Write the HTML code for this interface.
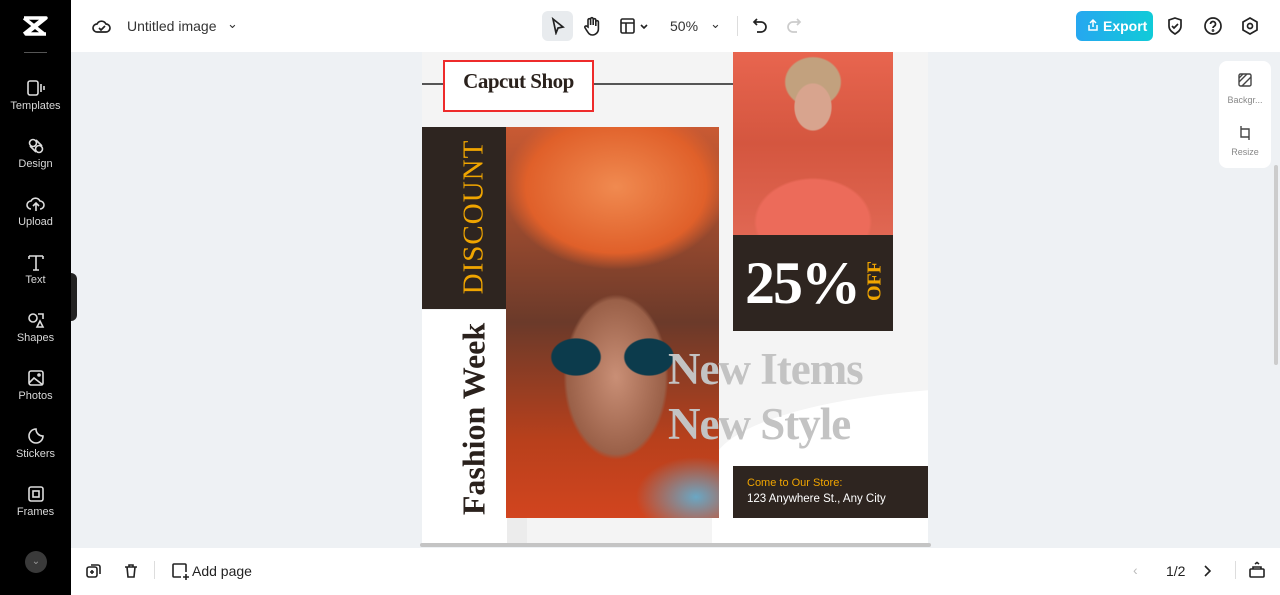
<!DOCTYPE html>
<html><head><meta charset="utf-8"><style>
*{margin:0;padding:0;box-sizing:border-box}
body{width:1280px;height:595px;overflow:hidden;background:#eef1f4;font-family:"Liberation Sans",sans-serif;position:relative}
.abs{position:absolute}
.side{left:0;top:0;width:71px;height:595px;background:#000}
.si{position:absolute;left:0;width:71px;text-align:center;color:#d8d8d8;font-size:11px}
.si svg{display:block;margin:0 auto 3px}
.top{left:71px;top:0;width:1209px;height:52px;background:#fff}
.bot{left:71px;top:548px;width:1209px;height:47px;background:#fff}
.serif{font-family:"Liberation Serif",serif}
</style></head><body>
<div class="abs side"></div>
<svg class="abs" style="left:22px;top:15px" width="26" height="22" viewBox="0 0 26 22"><path d="M2 3h22L4 19h20M2 3l20 16M2 19l20-16" stroke="#fff" stroke-width="3.5" fill="none" stroke-linejoin="round"/></svg>
<div class="abs" style="left:24px;top:52px;width:23px;height:1px;background:#555"></div>
<div class="si" style="top:79px"><svg width="20" height="18" viewBox="0 0 20 18" fill="none" stroke="#ddd" stroke-width="1.6"><rect x="2" y="2" width="10" height="14" rx="2"/><path d="M15 5v8M18 7v4"/></svg>Templates</div>
<div class="si" style="top:137px"><svg width="20" height="18" viewBox="0 0 20 18" fill="none" stroke="#ddd" stroke-width="1.6"><circle cx="7" cy="6" r="3.5"/><circle cx="13" cy="12" r="3.5"/><path d="M10 3l6 6M4 9l6 6"/></svg>Design</div>
<div class="si" style="top:195px"><svg width="20" height="18" viewBox="0 0 20 18" fill="none" stroke="#ddd" stroke-width="1.6"><path d="M5 14a4 4 0 010-8 5 5 0 019 0 4 4 0 010 8M10 16V9M7 11l3-3 3 3"/></svg>Upload</div>
<div class="si" style="top:253px"><svg width="20" height="18" viewBox="0 0 20 18" fill="none" stroke="#ddd" stroke-width="1.6"><path d="M3 3h14M10 3v14M3 3v3M17 3v3M7 17h6"/></svg>Text</div>
<div class="si" style="top:311px"><svg width="20" height="18" viewBox="0 0 20 18" fill="none" stroke="#ddd" stroke-width="1.6"><circle cx="7" cy="7" r="4"/><path d="M12 3h5v5M11 16l3-6 3 6z"/></svg>Shapes</div>
<div class="si" style="top:369px"><svg width="20" height="18" viewBox="0 0 20 18" fill="none" stroke="#ddd" stroke-width="1.6"><rect x="3" y="2" width="14" height="14" rx="2"/><path d="M3 14l5-5 9 7"/><circle cx="13" cy="6" r="1"/></svg>Photos</div>
<div class="si" style="top:427px"><svg width="20" height="18" viewBox="0 0 20 18" fill="none" stroke="#ddd" stroke-width="1.6"><path d="M17 9a7 7 0 11-7-7c0 4 3 7 7 7z"/></svg>Stickers</div>
<div class="si" style="top:485px"><svg width="20" height="18" viewBox="0 0 20 18" fill="none" stroke="#ddd" stroke-width="1.6"><rect x="3" y="2" width="14" height="14" rx="2"/><rect x="7" y="6" width="6" height="6"/></svg>Frames</div>
<div class="abs" style="left:25px;top:551px;width:22px;height:22px;border-radius:50%;background:#3a3a3a;color:#999;font-size:10px;text-align:center;line-height:22px">⌄</div>
<div class="abs" style="left:71px;top:273px;width:6px;height:48px;background:#222;border-radius:0 6px 6px 0"></div>

<div class="abs top"></div>
<svg class="abs" style="left:92px;top:17px" width="20" height="18" viewBox="0 0 20 18" fill="none" stroke="#222" stroke-width="1.7"><path d="M5 15a4 4 0 010-8 5 5 0 019 0 4 4 0 010 8z"/><path d="M7 11l2 2 4-4"/></svg>
<div class="abs" style="left:127px;top:18px;font-size:14px;color:#333">Untitled image</div>
<div class="abs" style="left:227px;top:16px;font-size:13px;color:#333">⌄</div>
<div class="abs" style="left:542px;top:11px;width:31px;height:30px;background:#e8ebee;border-radius:6px"></div>
<svg class="abs" style="left:550px;top:17px" width="16" height="18" viewBox="0 0 16 18" fill="none" stroke="#222" stroke-width="1.7"><path d="M3 2l10 8-5 1-2 5z"/></svg>
<svg class="abs" style="left:583px;top:16px" width="18" height="20" viewBox="0 0 18 20" fill="none" stroke="#222" stroke-width="1.6"><path d="M5 11V4a1.3 1.3 0 012.6 0v5V3a1.3 1.3 0 012.6 0v6V4a1.3 1.3 0 012.6 0v6V6a1.3 1.3 0 012.6 0v7a6 6 0 01-6 6c-3 0-4-2-6-5l-1.5-2.5a1.2 1.2 0 012-1.2z"/></svg>
<svg class="abs" style="left:619px;top:17px" width="30" height="18" viewBox="0 0 30 18" fill="none" stroke="#222" stroke-width="1.6"><rect x="2" y="2" width="13" height="14" rx="1.5"/><path d="M2 6h13M7 6v10M22 8l3 3 3-3"/></svg>
<div class="abs" style="left:670px;top:18px;font-size:14px;color:#333">50%</div>
<div class="abs" style="left:710px;top:16px;font-size:13px;color:#333">⌄</div>
<div class="abs" style="left:737px;top:16px;width:1px;height:20px;background:#ddd"></div>
<svg class="abs" style="left:751px;top:16px" width="18" height="18" viewBox="0 0 18 18" fill="none" stroke="#222" stroke-width="1.7"><path d="M6 3L3 6l3 3M3 6h7a5 5 0 010 10H6"/></svg>
<svg class="abs" style="left:785px;top:16px" width="18" height="18" viewBox="0 0 18 18" fill="none" stroke="#ccc" stroke-width="1.7"><path d="M12 3l3 3-3 3M15 6H8a5 5 0 000 10h4"/></svg>
<div class="abs" style="left:1076px;top:11px;width:77px;height:30px;border-radius:6px;background:linear-gradient(90deg,#26a7f0,#10cbd8);color:#fff;font-size:14px;font-weight:bold;line-height:30px;padding-left:27px">Export</div>
<svg class="abs" style="left:1087px;top:18px" width="12" height="14" viewBox="0 0 12 14" fill="none" stroke="#fff" stroke-width="1.5"><path d="M6 9V2M3 5l3-3 3 3M2 7v5h8V7"/></svg>
<svg class="abs" style="left:1166px;top:16px" width="18" height="20" viewBox="0 0 18 20" fill="none" stroke="#222" stroke-width="1.7"><path d="M9 2l6 2v6c0 4-3 6-6 8-3-2-6-4-6-8V4z"/><path d="M6 10l2 2 4-4"/></svg>
<svg class="abs" style="left:1203px;top:16px" width="20" height="20" viewBox="0 0 20 20" fill="none" stroke="#222" stroke-width="1.7"><circle cx="10" cy="10" r="8"/><path d="M7.5 8a2.5 2.5 0 114 2c-1 .6-1.5 1-1.5 2"/><circle cx="10" cy="14.5" r=".5"/></svg>
<svg class="abs" style="left:1241px;top:16px" width="18" height="20" viewBox="0 0 18 20" fill="none" stroke="#222" stroke-width="1.7"><path d="M9 2l7 4v8l-7 4-7-4V6z"/><circle cx="9" cy="10" r="2.5"/></svg>

<!-- page -->
<div class="abs" style="left:422px;top:52px;width:506px;height:493px;background:#f4f4f4;overflow:hidden">
  <div class="abs" style="left:0;top:390px;width:105px;height:140px;background:#ececec;border-radius:60px 60px 0 0"></div>
  <div class="abs" style="left:0;top:258px;width:85px;height:240px;background:#fff"></div>
  <div class="abs" style="left:290px;top:335px;width:300px;height:200px;background:#fff;border-radius:100% 0 0 0 / 40% 0 0 0"></div>
  <div class="abs" style="left:0;top:31px;width:311px;height:1.5px;background:#555"></div>
  <div class="abs" style="left:21px;top:8px;width:151px;height:52px;border:2px solid #ee2b2b;background:#fff"></div>
  <div class="abs serif" style="left:21px;top:17px;width:151px;text-align:center;font-size:21px;font-weight:bold;color:#2a211c;letter-spacing:-0.5px">Capcut Shop</div>
  <div class="abs" style="left:0;top:75px;width:84px;height:182px;background:#2e2520"></div>
  <div class="abs serif" style="left:52px;top:165px;transform:translate(-50%,-50%) rotate(-90deg);font-size:29px;color:#f0a500;white-space:nowrap;letter-spacing:1px">DISCOUNT</div>
  <div class="abs serif" style="left:52px;top:367px;transform:translate(-50%,-50%) rotate(-90deg);font-size:32px;color:#2a211c;white-space:nowrap;font-weight:bold">Fashion Week</div>
  <div class="abs" style="left:84px;top:75px;width:213px;height:391px;background:
    radial-gradient(ellipse 40px 30px at 70px 230px,#0c3b4c 60%,transparent 64%),
    radial-gradient(ellipse 40px 30px at 143px 230px,#0c3b4c 60%,transparent 64%),
    radial-gradient(ellipse 70px 110px at 110px 250px,#c98f76,#9a6048 70%,transparent 75%),
    radial-gradient(ellipse 150px 110px at 110px 60px,#f08a50,#e0602a 60%,transparent 75%),
    radial-gradient(ellipse 60px 40px at 190px 370px,#6aa7c4,transparent),
    linear-gradient(180deg,#c95a33,#6b3a2a 50%,#b8401c 80%,#d2451f)"></div>
  <div class="abs" style="left:311px;top:0;width:160px;height:183px;background:
    radial-gradient(ellipse 30px 38px at 80px 55px,#d8a48e 60%,transparent 64%),
    radial-gradient(ellipse 45px 40px at 80px 30px,#c2a17e 60%,transparent 64%),
    radial-gradient(ellipse 80px 60px at 80px 170px,#ec6b5a 70%,transparent 74%),
    linear-gradient(180deg,#e8654f,#d4563f 50%,#e06753)"></div>
  <div class="abs" style="left:311px;top:183px;width:160px;height:96px;background:#2e2520"></div>
  <div class="abs serif" style="left:323px;top:197px;font-size:60px;font-weight:bold;color:#fff;letter-spacing:-2px">25%</div>
  <div class="abs serif" style="left:453px;top:229px;transform:translate(-50%,-50%) rotate(-90deg);font-size:20px;color:#f0a500;font-weight:bold">OFF</div>
  <div class="abs serif" style="left:246px;top:290px;font-size:45px;font-weight:bold;line-height:55px;color:#c3c3c3;letter-spacing:-1px;white-space:nowrap">New Items<br>New Style</div>
  <div class="abs" style="left:311px;top:414px;width:195px;height:52px;background:#2e2520"></div>
  <div class="abs" style="left:325px;top:425px;font-size:11px;color:#f0a500">Come to Our Store:</div>
  <div class="abs" style="left:325px;top:441px;font-size:11.5px;color:#fff">123 Anywhere St., Any City</div>
</div>
<div class="abs" style="left:420px;top:543px;width:511px;height:4px;background:#c4c4c4;border-radius:2px"></div>

<div class="abs" style="left:1219px;top:61px;width:52px;height:107px;background:#fff;border-radius:8px"></div>
<svg class="abs" style="left:1237px;top:72px" width="16" height="16" viewBox="0 0 16 16" fill="none" stroke="#444" stroke-width="1.4"><rect x="2" y="2" width="12" height="12" rx="1.5"/><path d="M2 10l8-8M5 14l9-9M2 6l4-4"/></svg>
<div class="abs" style="left:1219px;top:95px;width:52px;text-align:center;font-size:9px;color:#888">Backgr...</div>
<svg class="abs" style="left:1237px;top:125px" width="16" height="16" viewBox="0 0 16 16" fill="none" stroke="#444" stroke-width="1.4"><path d="M4 1v3M12 12v3M4 4h8v8H4z"/></svg>
<div class="abs" style="left:1219px;top:147px;width:52px;text-align:center;font-size:9px;color:#888">Resize</div>
<div class="abs" style="left:1274px;top:165px;width:4px;height:200px;background:#ccc;border-radius:2px"></div>

<div class="abs bot"></div>
<svg class="abs" style="left:85px;top:562px" width="18" height="18" viewBox="0 0 18 18" fill="none" stroke="#222" stroke-width="1.6"><rect x="2" y="5" width="10" height="10" rx="2"/><path d="M6 3h7a2 2 0 012 2v7M7 8v4M5 10h4"/></svg>
<svg class="abs" style="left:122px;top:562px" width="18" height="18" viewBox="0 0 18 18" fill="none" stroke="#222" stroke-width="1.6"><path d="M3 5h12M7 5V3h4v2M5 5l1 10h6l1-10"/></svg>
<div class="abs" style="left:154px;top:561px;width:1px;height:18px;background:#ddd"></div>
<svg class="abs" style="left:170px;top:561px" width="20" height="20" viewBox="0 0 20 20" fill="none" stroke="#222" stroke-width="1.6"><path d="M11 16H4a1 1 0 01-1-1V4a1 1 0 011-1h11a1 1 0 011 1v7M16 13v6M13 16h6"/></svg>
<div class="abs" style="left:192px;top:563px;font-size:14px;color:#222">Add page</div>
<div class="abs" style="left:1133px;top:562px;font-size:14px;color:#bbb">&#8249;</div>
<div class="abs" style="left:1166px;top:563px;font-size:14px;color:#222">1/2</div>
<svg class="abs" style="left:1202px;top:564px" width="10" height="14" viewBox="0 0 10 14" fill="none" stroke="#222" stroke-width="1.6"><path d="M3 2l5 5-5 5"/></svg>
<div class="abs" style="left:1235px;top:561px;width:1px;height:18px;background:#ddd"></div>
<svg class="abs" style="left:1248px;top:561px" width="18" height="18" viewBox="0 0 18 18" fill="none" stroke="#222" stroke-width="1.6"><rect x="2" y="8" width="14" height="8" rx="1"/><path d="M5 8V6h8v2M7 3l2-1.5L11 3"/></svg>
</body></html>
